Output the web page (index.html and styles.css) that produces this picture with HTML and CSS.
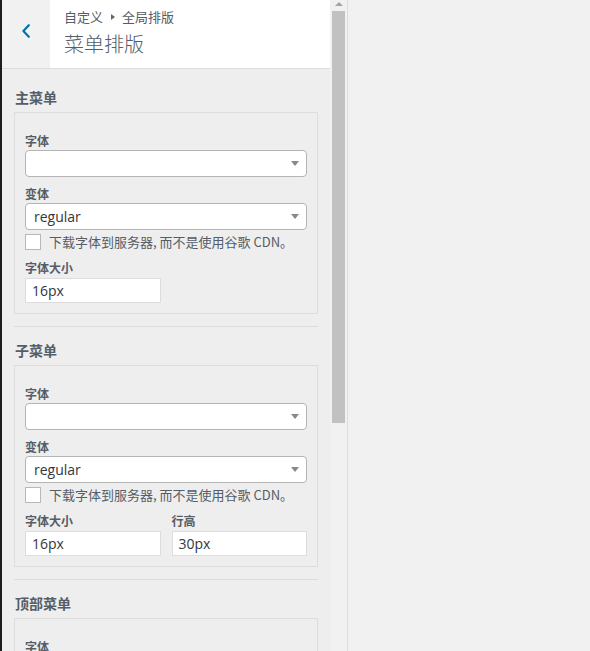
FILE: index.html
```html
<!DOCTYPE html>
<html lang="zh-CN">
<head>
<meta charset="utf-8">
<title>菜单排版</title>
<link rel="stylesheet" href="styles.css">
</head>
<body>
<div class="app">
  <div class="edge"></div>
  <aside class="panel">
    <div class="panel-main">
      <header class="head">
        <div class="back">
          <svg class="chev" width="10" height="14" viewBox="0 0 10 14"><path d="M7.8 1.2 L2.4 7 L7.8 12.8" fill="none" stroke="#0073aa" stroke-width="2.2" stroke-linecap="round" stroke-linejoin="round"/></svg>
        </div>
        <div class="titles">
          <div class="crumb">自定义<span class="tri"></span>全局排版</div>
          <h1 class="title">菜单排版</h1>
        </div>
      </header>

      <section class="group first">
        <h2 class="gtitle">主菜单</h2>
        <div class="box">
          <label class="lbl">字体</label>
          <div class="sel"><span class="sel-text"></span><span class="arrow"></span></div>
          <label class="lbl gap">变体</label>
          <div class="sel"><span class="sel-text">regular</span><span class="arrow"></span></div>
          <div class="check"><span class="cb"></span><span class="cb-text">下载字体到服务器, 而不是使用谷歌 CDN。</span></div>
          <div class="pair">
            <div class="field"><label class="lbl">字体大小</label><div class="inp">16px</div></div>
          </div>
        </div>
      </section>

      <section class="group">
        <h2 class="gtitle">子菜单</h2>
        <div class="box">
          <label class="lbl">字体</label>
          <div class="sel"><span class="sel-text"></span><span class="arrow"></span></div>
          <label class="lbl gap">变体</label>
          <div class="sel"><span class="sel-text">regular</span><span class="arrow"></span></div>
          <div class="check"><span class="cb"></span><span class="cb-text">下载字体到服务器, 而不是使用谷歌 CDN。</span></div>
          <div class="pair">
            <div class="field"><label class="lbl">字体大小</label><div class="inp">16px</div></div>
            <div class="field"><label class="lbl">行高</label><div class="inp">30px</div></div>
          </div>
        </div>
      </section>

      <section class="group">
        <h2 class="gtitle">顶部菜单</h2>
        <div class="box">
          <label class="lbl">字体</label>
          <div class="sel"><span class="sel-text"></span><span class="arrow"></span></div>
        </div>
      </section>
    </div>
    <div class="scrollbar">
      <div class="sb-up"></div>
      <div class="sb-thumb"></div>
    </div>
  </aside>
  <div class="preview"></div>
</div>
</body>
</html>
```
FILE: styles.css
```css
* { box-sizing: border-box; }
html, body { margin: 0; padding: 0; }
body {
  width: 590px;
  height: 651px;
  overflow: hidden;
  background: #f1f1f1;
  font-family: "Open Sans", "Noto Sans CJK SC", sans-serif;
  color: #555d66;
}
.app { display: flex; height: 651px; }
.edge { width: 2px; background: #1d1d1d; flex: none; }
.panel {
  display: flex;
  flex: none;
  width: 346px;
  height: 651px;
  border-right: 1px solid #dddddd;
  background: #eeeeee;
}
.panel-main { width: 328px; height: 651px; overflow: hidden; flex: none; }
.head {
  display: flex;
  height: 69px;
  border-bottom: 1px solid #dddddd;
  background: #ffffff;
}
.back {
  width: 48px;
  flex: none;
  background: #f1f1f1;
  padding: 24px 0 0 19px;
}
.chev { display: block; }
.titles { padding: 8px 0 0 14px; }
.crumb {
  font-size: 13px;
  line-height: 18px;
  color: #555d66;
  display: flex;
  align-items: center;
  font-family: "Noto Sans CJK SC", sans-serif;
}
.tri {
  width: 0; height: 0;
  border-left: 4px solid #666;
  border-top: 3px solid transparent;
  border-bottom: 3px solid transparent;
  margin: 0 7px 0 8px;
}
.title {
  margin: 4px 0 0;
  font-size: 20px;
  line-height: 28px;
  font-weight: 300;
  color: #555d66;
  font-family: "Noto Sans CJK SC", sans-serif;
}
.group {
  margin: 12px 12px 0;
  border-top: 1px solid #dddddd;
  padding-top: 13px;
}
.group.first { margin-top: 18px; border-top: 0; padding-top: 0; }
.gtitle {
  margin: 0 0 5px 1px;
  font-size: 14px;
  line-height: 20px;
  font-weight: 600;
  color: #555d66;
  font-family: "Noto Sans CJK SC", sans-serif;
}
.box {
  border: 1px solid #dddddd;
  padding: 19px 10px 10px;
  display: flex;
  flex-direction: column;
}
.lbl {
  display: block;
  font-size: 12px;
  line-height: 18px;
  font-weight: 600;
  color: #555d66;
  font-family: "Noto Sans CJK SC", sans-serif;
}
.lbl.gap { margin-top: 8px; }
.sel {
  position: relative;
  height: 27px;
  background: #ffffff;
  border: 1px solid #b4b4b4;
  border-radius: 4px;
  display: flex;
  align-items: center;
  padding-left: 8px;
}
.sel-text { font-size: 14px; color: #32373c; line-height: 20px; }
.arrow {
  position: absolute;
  right: 7px;
  top: 10px;
  width: 0; height: 0;
  border-top: 5px solid #888888;
  border-left: 4px solid transparent;
  border-right: 4px solid transparent;
}
.check {
  display: flex;
  align-items: center;
  margin-top: 4px;
  height: 16px;
}
.cb {
  width: 16px; height: 16px;
  flex: none;
  border: 1px solid #b4b9be;
  background: #ffffff;
}
.cb-text {
  margin-left: 8px;
  font-size: 13px;
  line-height: 16px;
  color: #555d66;
  font-family: "Noto Sans CJK SC", sans-serif;
}
.pair {
  display: grid;
  grid-template-columns: 1fr 1fr;
  column-gap: 11px;
  margin-top: 9px;
}
.inp {
  margin-top: 1px;
  height: 25px;
  background: #ffffff;
  border: 1px solid #dddddd;
  padding-left: 6px;
  font-size: 14px;
  line-height: 23px;
  color: #32373c;
}
.scrollbar {
  width: 17px;
  flex: none;
  background: #f1f1f1;
  display: flex;
  flex-direction: column;
  align-items: center;
}
.sb-up {
  margin-top: 2px;
  width: 0; height: 0;
  border-bottom: 4px solid #a3a3a3;
  border-left: 4px solid transparent;
  border-right: 4px solid transparent;
}
.sb-thumb {
  margin-top: 5px;
  width: 13px;
  height: 412px;
  background: #c1c1c1;
}
.preview { flex: 1; background: #f1f1f1; }
```
